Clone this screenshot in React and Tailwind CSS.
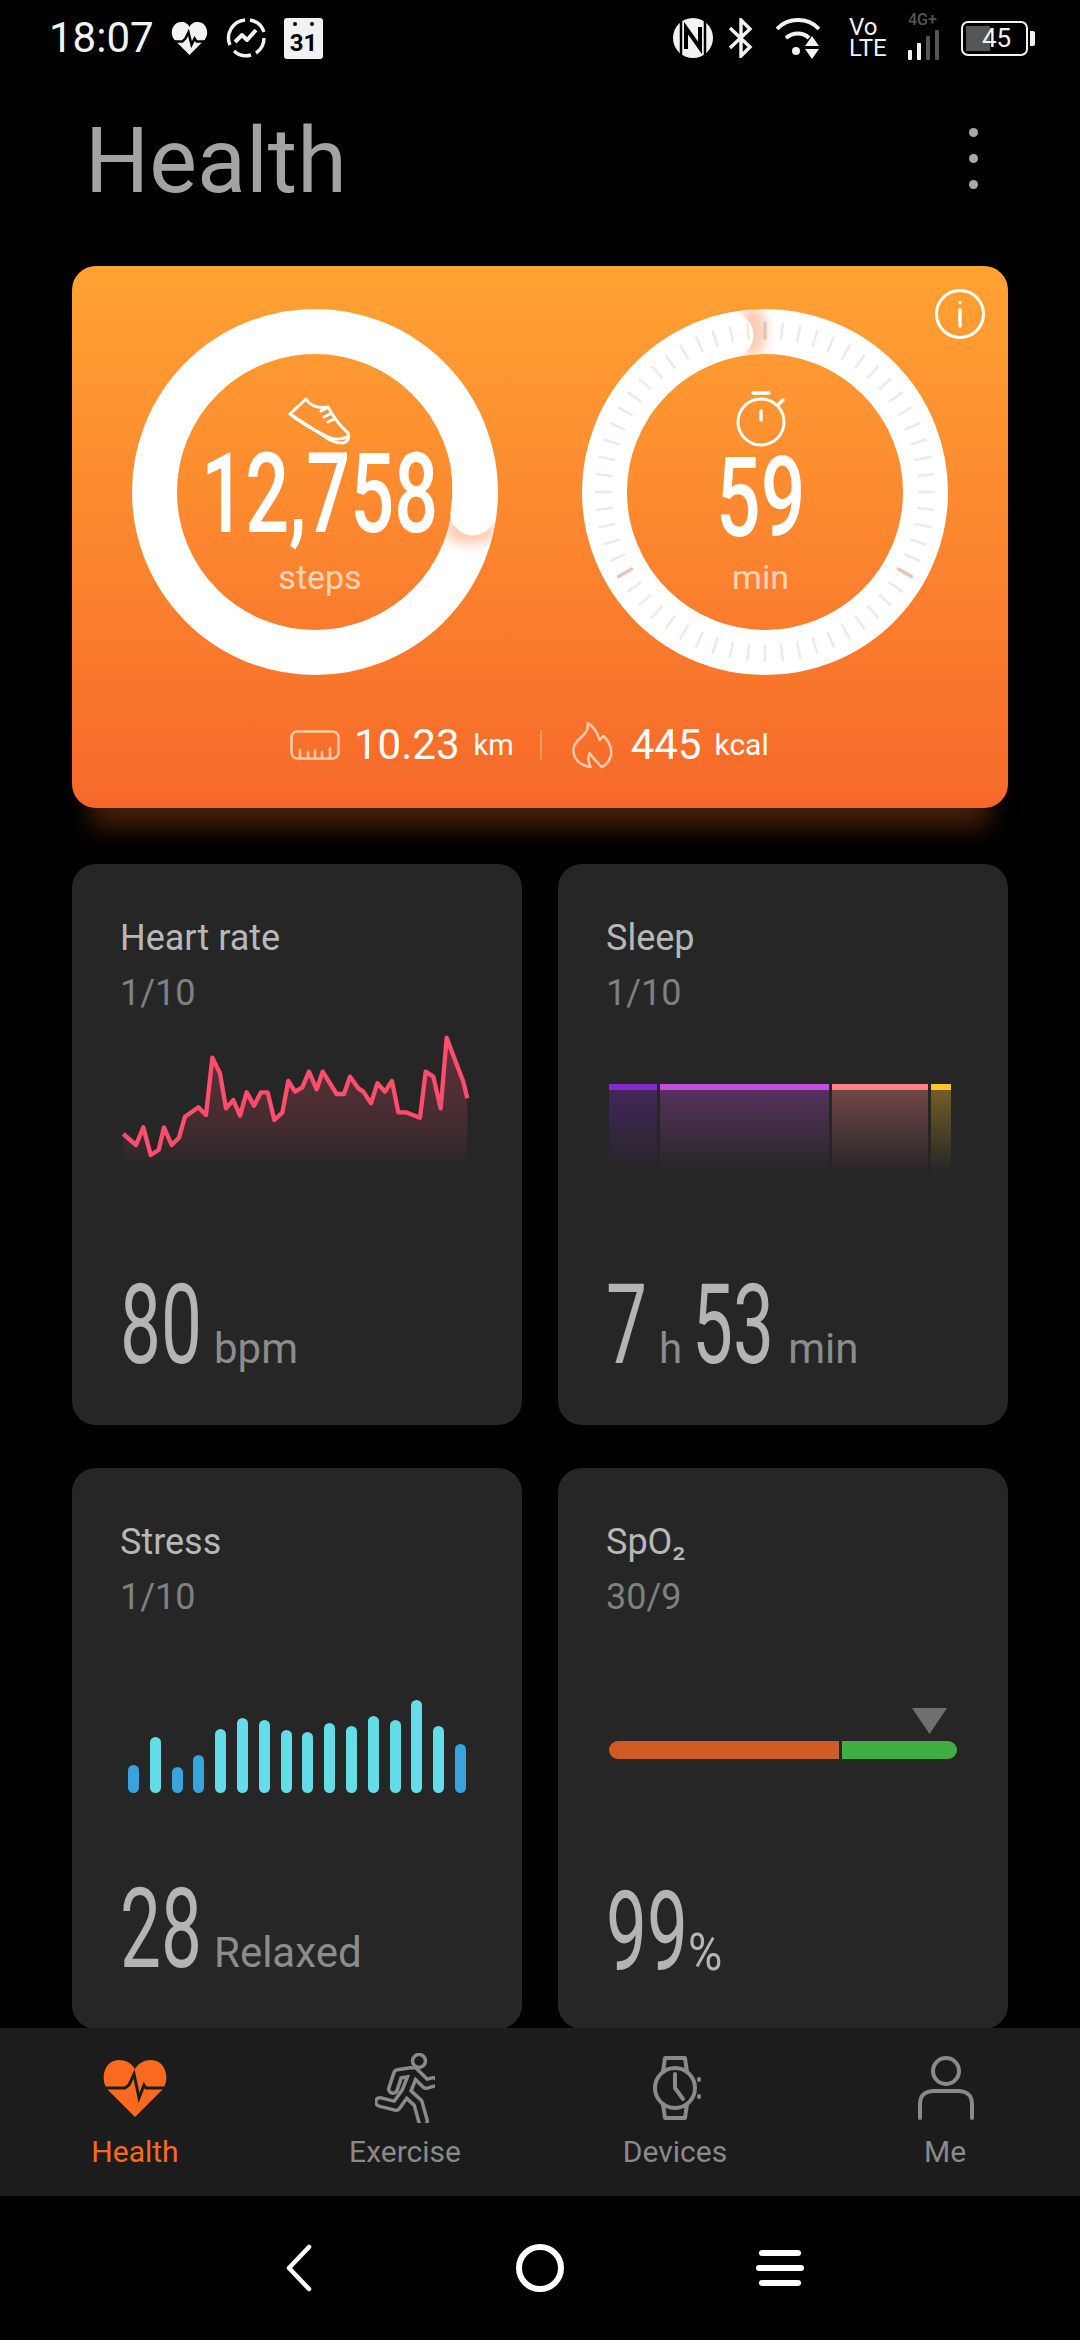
const heartLine = [
  [70, 372], [108, 405], [130, 352], [152, 435], [176, 420], [192, 352], [215, 405], [237, 383], [255, 320], [295, 292],
  [318, 315], [337, 143], [360, 190], [378, 295], [400, 270], [420, 317], [440, 247], [462, 287], [483, 247], [503, 247],
  [523, 330], [547, 308], [565, 213], [585, 245], [607, 232], [627, 185], [650, 238], [668, 185], [710, 252], [732, 252],
  [750, 200], [775, 235], [790, 245], [813, 280], [832, 220], [855, 245], [876, 213], [895, 307], [917, 307], [960, 323],
  [977, 185], [1000, 200], [1022, 295], [1040, 83], [1065, 150], [1090, 215], [1102, 265],
];

const sleepBars = [
  { width: 48, top: "bg-[#8229d8]", fill: "from-[#8229d8]/30" },
  { width: 169, top: "bg-[#c34fe0]", fill: "from-[#c34fe0]/30" },
  { width: 96, top: "bg-[#ff8080]", fill: "from-[#ff8080]/35" },
  { width: 20, top: "bg-[#ffc425]", fill: "from-[#ffc425]/35" },
];

const stressBars = [28, 56, 26, 38, 64, 75, 73, 63, 61, 70, 67, 77, 73, 93, 67, 49];
const lowStress = [0, 2, 3, 15];

function BigNum({ children, width, className = "" }) {
  return (
    <span className={`inline-block origin-left scale-x-[0.65] whitespace-nowrap text-[112px] font-normal text-[#b4b4b4] ${className}`} style={{ width }}>
      {children}
    </span>
  );
}

function Unit({ children, className = "" }) {
  return <span className={`text-[42px] text-[#8c8c8c] ${className}`}>{children}</span>;
}

function MetricCard({ title, date, value, children }) {
  return (
    <div className="flex h-[561px] flex-col rounded-[24px] bg-[#262626] pl-[48px] pt-[52px]">
      <p className="text-[36px] leading-[44px] text-[#b8b8b8]">{title}</p>
      <p className="mt-[11px] text-[36px] leading-[44px] text-[#808080]">{date}</p>
      {children}
      <div className="mt-auto mb-[19px] flex items-baseline leading-[115px]">{value}</div>
    </div>
  );
}

function HeartChart() {
  const line = heartLine.map((p) => p.join(",")).join(" ");
  return (
    <svg width="400" height="200" viewBox="0 0 1200 600" className="-ml-[20px] -mt-[5px]">
      <defs>
        <linearGradient id="hrFill" x1="0" y1="80" x2="0" y2="475" gradientUnits="userSpaceOnUse">
          <stop offset="0" stopColor="#ff4d6d" stopOpacity="0.28" />
          <stop offset="0.7" stopColor="#ff4d6d" stopOpacity="0.13" />
          <stop offset="1" stopColor="#ff4d6d" stopOpacity="0" />
        </linearGradient>
      </defs>
      <polygon points={`70,475 ${line} 1102,475`} fill="url(#hrFill)" />
      <polyline points={line} fill="none" stroke="#ff4d6d" strokeWidth="13" strokeLinejoin="round" />
    </svg>
  );
}

function SleepChart() {
  return (
    <div className="ml-[3px] mt-[69px] flex h-[88px] gap-[3px]">
      {sleepBars.map((bar) => (
        <div key={bar.top} className="flex flex-col" style={{ width: bar.width }}>
          <div className={`h-[6px] ${bar.top}`} />
          <div className={`flex-1 bg-linear-to-b to-transparent ${bar.fill}`} />
        </div>
      ))}
    </div>
  );
}

function StressChart() {
  return (
    <div className="ml-[8px] mt-[81px] flex h-[93px] items-end gap-[10.8px]">
      {stressBars.map((h, i) => (
        <div
          key={i}
          className={`w-[11px] rounded-full ${lowStress.includes(i) ? "bg-[#38a3dc]" : "bg-[#65dde8]"}`}
          style={{ height: h }}
        />
      ))}
    </div>
  );
}

function SpoChart() {
  return (
    <div className="ml-[3px] mt-[89px] w-[348px]">
      <svg width="35" height="26" viewBox="0 0 35 26" className="ml-[303px] block">
        <polygon points="0,0 35,0 17.5,26" fill="#707070" />
      </svg>
      <div className="mt-[7px] flex h-[18px] gap-[3px]">
        <div className="w-[230px] rounded-l-full bg-[#d05c23]" />
        <div className="flex-1 rounded-r-full bg-[#3fae43]" />
      </div>
    </div>
  );
}

function StepsRing() {
  return (
    <div className="relative h-[366px] w-[366px]">
      <svg width="366" height="366" viewBox="0 0 366 366" className="absolute inset-0">
        <defs>
          <clipPath id="stepsCap">
            <path d="M183 0a183 183 0 1 0 .01 0zM183 45a138 138 0 1 1-.01 0z" clipRule="evenodd" />
          </clipPath>
          <filter id="capBlur" x="-50%" y="-50%" width="200%" height="200%">
            <feGaussianBlur stdDeviation="6" />
          </filter>
        </defs>
        <circle cx="183" cy="183" r="160.5" fill="none" stroke="#fff" strokeWidth="45" />
        <g clipPath="url(#stepsCap)">
          <ellipse cx="338" cy="222" rx="26" ry="13" fill="#f98a50" opacity="0.45" filter="url(#capBlur)" />
        </g>
        <path d="M341.6 160A160.5 160.5 0 0 1 341 204" fill="none" stroke="#fff" strokeWidth="45" strokeLinecap="round" />
      </svg>
      <div className="absolute inset-0 flex flex-col items-center pl-[10px] pt-[87px] text-white">
        <svg width="64" height="50" viewBox="0 0 64 50" fill="none" stroke="#fff" strokeWidth="3" strokeLinejoin="round" strokeLinecap="round">
          <path d="M2 18 18 3c3 5 10 10 22 8 4 7 12 19 18 24 4 3 4 11-4 12-4 0-8-1-12-3Z" />
          <path d="M2 18c10 8 24 16 36 22 6 3 14 4 21 1" />
          <path d="M33 15l6-3M36 21l6-3M40 26l6-3" />
        </svg>
        <span className="-mt-[8px] scale-x-[0.69] whitespace-nowrap text-[112px] font-medium leading-[112px]">12,758</span>
        <span className="mt-[5px] text-[34px] leading-[44px] text-white/65">steps</span>
      </div>
    </div>
  );
}

function TimeRing() {
  const ticks = Array.from({ length: 60 }, (_, i) => i);
  return (
    <div className="relative h-[366px] w-[366px]">
      <svg width="366" height="366" viewBox="0 0 366 366" className="absolute inset-0">
        <defs>
          <clipPath id="timeCap">
            <path d="M183 0a183 183 0 1 0 .01 0zM183 45a138 138 0 1 1-.01 0z" clipRule="evenodd" />
          </clipPath>
          <filter id="timeBlur" x="-50%" y="-50%" width="200%" height="200%">
            <feGaussianBlur stdDeviation="6" />
          </filter>
        </defs>
        <circle cx="183" cy="183" r="160.5" fill="none" stroke="#fff" strokeWidth="45" />
        <g clipPath="url(#timeCap)">
          <ellipse cx="171" cy="22" rx="13" ry="26" fill="#f98a50" opacity="0.45" filter="url(#timeBlur)" />
        </g>
        <path d="M120 35A160.5 160.5 0 0 1 149 26" fill="none" stroke="#fff" strokeWidth="45" strokeLinecap="round" />
        {ticks.map((i) => (
          <line
            key={i}
            x1="183"
            y1="14"
            x2="183"
            y2="29"
            stroke={i === 0 || i === 20 || i === 40 ? "#e2c6b6" : "#f0e9e4"}
            strokeWidth={i === 0 || i === 20 || i === 40 ? 3.5 : 2.5}
            strokeLinecap="round"
            transform={`rotate(${i * 6} 183 183)`}
          />
        ))}
      </svg>
      <div className="absolute inset-0 flex flex-col items-center pr-[9px] pt-[82px] text-white">
        <svg width="50" height="56" viewBox="0 0 50 56" fill="none" stroke="#fff" strokeWidth="3" strokeLinecap="round">
          <circle cx="25" cy="31" r="23" />
          <path d="M17 2h16M25 20v9M42 14l5-5" strokeWidth="3.5" />
        </svg>
        <span className="-mt-[5px] scale-x-[0.7] whitespace-nowrap text-[112px] font-medium leading-[112px]">59</span>
        <span className="mt-[1px] text-[34px] leading-[44px] text-white/65">min</span>
      </div>
    </div>
  );
}

function StatusBar() {
  return (
    <div className="flex h-[76px] items-center pl-[49px] text-[#f2f2f2]">
      <span className="w-[122px] text-[42px] leading-none">18:07</span>
      <svg width="37" height="35" viewBox="0 0 36 34">
        <path d="M18 33 3 18C-2 11 2 1 10 1c4 0 7 2 8 5 1-3 4-5 8-5 8 0 12 10 7 17Z" fill="#f2f2f2" />
        <path d="M0 20h11l3-3 3-6 3 12 3-6 2 3h11" fill="none" stroke="#000" strokeWidth="2.4" />
      </svg>
      <svg width="42" height="42" viewBox="0 0 42 42" fill="none" stroke="#f2f2f2" strokeWidth="3.4" className="ml-[17px]">
        <path d="M5 28A18 18 0 0 1 20 3M25 3a18 18 0 0 1 14 12M39 21a18 18 0 0 1-8 15M26 38A18 18 0 0 1 9 34" />
        <path d="M10 25l7-7 5 5 9-10" strokeWidth="4" strokeLinejoin="round" />
      </svg>
      <div className="relative ml-[17px] flex h-[41px] w-[39px] items-end justify-center rounded-[3px] bg-[#f2f2f2] pb-[2px] text-[24px] font-bold leading-[28px] text-black">
        31
        <span className="absolute left-[9px] top-[4px] h-[4px] w-[4px] rounded-full bg-black" />
        <span className="absolute right-[9px] top-[4px] h-[4px] w-[4px] rounded-full bg-black" />
      </div>

      <svg width="40" height="40" viewBox="0 0 40 40" className="ml-[350px]">
        <circle cx="20" cy="20" r="20" fill="#f2f2f2" />
        <path d="M8 0v40M32 0v40" stroke="#000" strokeWidth="2.5" />
        <path d="M13 31V10l14 20V9" fill="none" stroke="#000" strokeWidth="4" />
      </svg>
      <svg width="26" height="40" viewBox="0 0 26 40" fill="none" stroke="#f2f2f2" strokeWidth="3.4" className="ml-[15px]">
        <path d="M2 10l20 19-9 9V2l9 9L2 30" />
      </svg>
      <svg width="44" height="42" viewBox="0 0 44 42" className="ml-[22px]">
        <g fill="none" stroke="#f2f2f2" strokeWidth="4">
          <path d="M1 12C12 0 32 0 43 12" />
          <path d="M10 21c7-6 17-6 23 0" />
        </g>
        <circle cx="20" cy="34" r="4" fill="#f2f2f2" />
        <path d="M36 19l7 10H29ZM36 42l-7-10h14Z" fill="#f2f2f2" />
      </svg>
      <div className="ml-[29px] flex w-[41px] flex-col text-[24px] leading-[21px]">
        <span>Vo</span>
        <span>LTE</span>
      </div>
      <div className="ml-[18px] flex w-[36px] flex-col">
        <span className="-mt-[4px] text-[16px] font-medium leading-[14px] text-[#555]">4G+</span>
        <div className="mt-[3px] flex h-[30px] items-end gap-[5px]">
          <div className="h-[10px] w-[4px] rounded-[1px] bg-[#f2f2f2]" />
          <div className="h-[17px] w-[4px] rounded-[1px] bg-[#f2f2f2]" />
          <div className="h-[24px] w-[4px] rounded-[1px] bg-[#555]" />
          <div className="h-[30px] w-[4px] rounded-[1px] bg-[#555]" />
        </div>
      </div>
      <div className="ml-[17px] flex items-center gap-[2px]">
        <div className="relative flex h-[35px] w-[67px] items-center justify-center overflow-hidden rounded-[7px] border-[2.5px] border-[#f2f2f2] p-[3px] text-[26px] leading-none">
          <div className="absolute bottom-[3px] left-[3px] top-[3px] w-[24px] bg-[#555]" />
          <span className="relative ml-[4px]">45</span>
        </div>
        <div className="h-[15px] w-[5px] rounded-r-[2px] bg-[#f2f2f2]" />
      </div>
    </div>
  );
}

function Header() {
  return (
    <div className="flex h-[190px] items-start justify-between pl-[85px] pr-[102px]">
      <h1 className="mt-[41px] text-[90px] font-normal leading-[90px] text-[#a3a3a3]">Health</h1>
      <div className="mt-[52px] flex flex-col gap-[17px]">
        <div className="h-[9px] w-[9px] rounded-full bg-[#a8a8a8]" />
        <div className="h-[9px] w-[9px] rounded-full bg-[#a8a8a8]" />
        <div className="h-[9px] w-[9px] rounded-full bg-[#a8a8a8]" />
      </div>
    </div>
  );
}

function ActivityCard() {
  return (
    <div className="relative h-[542px] rounded-[24px] bg-linear-to-b from-[#ffa233] to-[#f6682a] pt-[43px] shadow-[0_38px_24px_-18px_rgba(249,106,40,0.28)]">
      <svg width="50" height="50" viewBox="0 0 50 50" fill="none" stroke="#fff" strokeWidth="3" strokeLinecap="round" className="absolute right-[23px] top-[23px]">
        <circle cx="25" cy="25" r="23.5" />
        <path d="M25 21v16" strokeWidth="3.5" />
        <circle cx="25" cy="13.5" r="1.6" fill="#fff" stroke="none" />
      </svg>
      <div className="flex gap-[84px] pl-[60px]">
        <StepsRing />
        <TimeRing />
      </div>
      <div className="ml-[218px] mt-[46px] flex h-[48px] items-center text-white">
        <svg width="50" height="30" viewBox="0 0 50 30" fill="none" stroke="#ffc9a8" strokeWidth="2.5" strokeLinecap="round">
          <rect x="1.5" y="1.5" width="47" height="27" rx="6" />
          <path d="M10 28v-8M18 28v-6M25 28v-8M32 28v-6M40 28v-10" />
        </svg>
        <span className="ml-[14px] text-[42px] leading-none">10.23</span>
        <span className="ml-[14px] text-[29px] leading-none">km</span>
        <div className="ml-[26px] h-[30px] w-[2px] bg-white/30" />
        <svg width="46" height="48" viewBox="0 0 45 48" fill="none" stroke="#ffc9a8" strokeWidth="2.5" strokeLinejoin="round" className="ml-[26px]">
          <path d="M19 2c5 2 10 9 12 17l4-4c6 6 9 14 7 21-2 6-6 9-9 10-4-5-9-9-12-14-2 4-1 9 1 14-7-1-13-4-16-11C2 25 9 20 15 14c3-3 5-8 4-12Z" />
        </svg>
        <span className="ml-[17px] text-[42px] leading-none">445</span>
        <span className="ml-[13px] text-[30px] leading-none">kcal</span>
      </div>
    </div>
  );
}

function RunIcon() {
  const body = "M39 19 51 31 58 29M36 19 23 21 18 36M39 19 31 39 43 50 48 68M31 39 21 53 5 49";
  return (
    <svg width="60" height="70" viewBox="0 0 60 70" fill="none" strokeLinecap="round" strokeLinejoin="round">
      <path d={body} stroke="#8a8a8a" strokeWidth="12" />
      <path d={body} stroke="#1c1c1c" strokeWidth="5" />
      <ellipse cx="44" cy="8" rx="6.5" ry="6.5" stroke="#8a8a8a" strokeWidth="3.5" />
    </svg>
  );
}

function NavItem({ icon, label, active }) {
  return (
    <div className="flex flex-col items-center pt-[24px]">
      <div className="flex h-[72px] items-center">{icon}</div>
      <span className={`mt-[8px] text-[30px] leading-[40px] ${active ? "text-[#f96a1e]" : "text-[#8a8a8a]"}`}>{label}</span>
    </div>
  );
}

function BottomNav() {
  return (
    <div className="grid h-[168px] grid-cols-4 bg-[#1c1c1c]">
      <NavItem
        active
        label="Health"
        icon={
          <svg width="64" height="58" viewBox="0 0 64 58">
            <path d="M32 58 4 30C-3 20 1 1 16 1c8 0 13 4 16 9 3-5 8-9 16-9 15 0 19 19 12 29Z" fill="#f96a1e" />
            <path d="M0 29h22l4-3 5-11 5 24 5-13 2 3h21" fill="none" stroke="#1c1c1c" strokeWidth="3" />
          </svg>
        }
      />
      <NavItem label="Exercise" icon={<RunIcon />} />
      <NavItem
        label="Devices"
        icon={
          <svg width="48" height="66" viewBox="0 0 48 66" fill="none" stroke="#8a8a8a" strokeWidth="4" strokeLinecap="round" strokeLinejoin="round" className="ml-[3px]">
            <circle cx="22" cy="33" r="20" />
            <path d="M10 17 12 3h20l2 14M10 49l2 14h20l2-14M22 19v14l8 11" />
            <path d="M46 24v1M46 41v1" />
          </svg>
        }
      />
      <NavItem
        label="Me"
        icon={
          <svg width="56" height="64" viewBox="0 0 56 64" fill="none" stroke="#8a8a8a" strokeWidth="4" strokeLinecap="round" className="ml-[1px]">
            <ellipse cx="28" cy="15" rx="13" ry="13" />
            <path d="M2 62V48c0-9 6-13 14-13h24c8 0 14 4 14 13v14" />
          </svg>
        }
      />
    </div>
  );
}

function SystemBar() {
  return (
    <div className="flex flex-1 items-start justify-center pl-[9px] pt-[48px]">
      <svg width="27" height="48" viewBox="0 0 27 48" fill="none" stroke="#fff" strokeWidth="4.5" strokeLinecap="round" strokeLinejoin="round">
        <path d="M24 3 4 24l20 21" />
      </svg>
      <div className="ml-[204px] h-[48px] w-[48px] rounded-full border-[6px] border-white" />
      <div className="ml-[192px] flex h-[48px] w-[48px] flex-col items-center justify-between py-[6px]">
        <div className="h-[6px] w-[42px] rounded-full bg-white" />
        <div className="h-[6px] w-[48px] rounded-full bg-white" />
        <div className="h-[6px] w-[42px] rounded-full bg-white" />
      </div>
    </div>
  );
}

export default function App() {
  return (
    <div className="flex h-[2340px] w-[1080px] flex-col overflow-hidden bg-black font-['Roboto',sans-serif]">
      <StatusBar />
      <Header />
      <div className="h-[1762px] shrink-0 overflow-hidden px-[72px]">
        <ActivityCard />
        <div className="mt-[56px] grid grid-cols-2 gap-x-[36px] gap-y-[43px]">
          <MetricCard
            title="Heart rate"
            date="1/10"
            value={
              <>
                <BigNum width={94}>80</BigNum>
                <Unit>bpm</Unit>
              </>
            }
          >
            <HeartChart />
          </MetricCard>
          <MetricCard
            title="Sleep"
            date="1/10"
            value={
              <>
                <BigNum width={46}>7</BigNum>
                <Unit className="ml-[7px]">h</Unit>
                <BigNum width={96} className="ml-[10px]">53</BigNum>
                <Unit>min</Unit>
              </>
            }
          >
            <SleepChart />
          </MetricCard>
          <MetricCard
            title="Stress"
            date="1/10"
            value={
              <>
                <BigNum width={94}>28</BigNum>
                <Unit>Relaxed</Unit>
              </>
            }
          >
            <StressChart />
          </MetricCard>
          <MetricCard
            title="SpO₂"
            date="30/9"
            value={
              <>
                <BigNum width={82}>99</BigNum>
                <span className="origin-left scale-x-[0.9] text-[52px] text-[#b4b4b4]">%</span>
              </>
            }
          >
            <SpoChart />
          </MetricCard>
        </div>
      </div>
      <BottomNav />
      <SystemBar />
    </div>
  );
}
